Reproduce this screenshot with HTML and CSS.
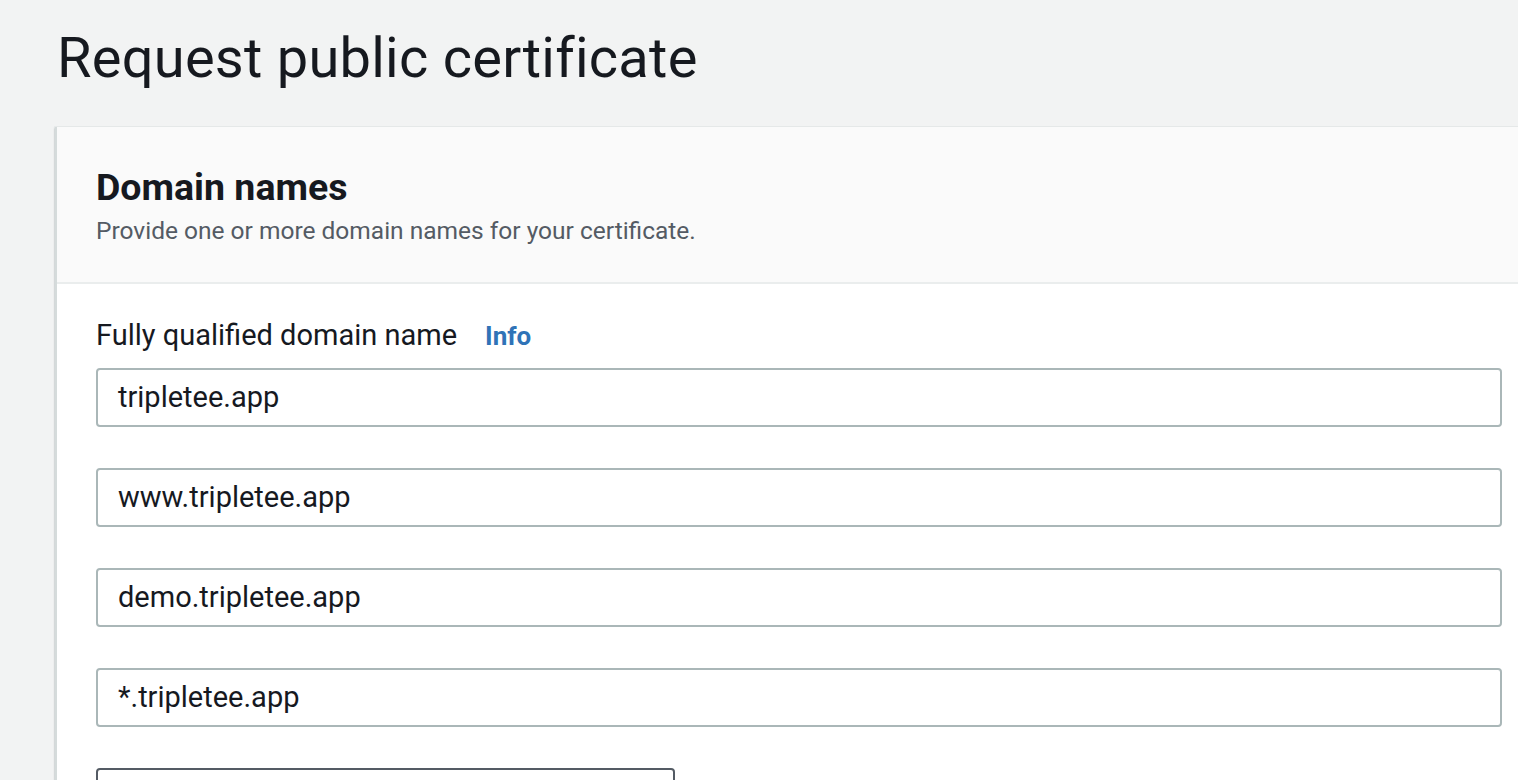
FILE: index.html
```html
<!DOCTYPE html>
<html>
<head>
<meta charset="utf-8">
<link rel="stylesheet" href="styles.css">
</head>
<body>
<main class="page">
  <h1 class="page-title">Request public certificate</h1>
  <section class="card">
    <header class="card-header">
      <h2 class="card-title">Domain names</h2>
      <p class="card-desc">Provide one or more domain names for your certificate.</p>
    </header>
    <div class="card-body">
      <div class="field-label">
        <span>Fully qualified domain name</span>
        <a class="info-link">Info</a>
      </div>
      <div class="inputs">
        <div class="text-input">tripletee.app</div>
        <div class="text-input">www.tripletee.app</div>
        <div class="text-input">demo.tripletee.app</div>
        <div class="text-input">*.tripletee.app</div>
        <div class="add-button"></div>
      </div>
    </div>
  </section>
</main>
</body>
</html>
```

FILE: styles.css
```css
html, body {
  margin: 0;
  padding: 0;
  background: #f2f3f3;
  overflow: hidden;
  height: 780px;
}
body {
  font-family: Roboto, "Liberation Sans", sans-serif;
  color: #16191f;
}
.page {
  padding-left: 55px;
}
.page-title {
  margin: 0;
  padding: 22px 0 0 2px;
  height: 127px;
  box-sizing: border-box;
  font-size: 56px;
  font-weight: 400;
  line-height: 72px;
  letter-spacing: 0.25px;
  color: #16191f;
}
.card {
  width: 1488px;
  background: #fff;
  border-left: 2px solid #d5dbdb;
  box-shadow: 0 1px 2px rgba(0,28,36,0.3), 0 0 0 1px #eaeded;
}
.card-header {
  background: #fafafa;
  border-bottom: 2px solid #eaeded;
  padding: 38px 40px 34px 39px;
  height: 157px;
  box-sizing: border-box;
}
.card-title {
  margin: 0;
  font-size: 37.5px;
  font-weight: 700;
  line-height: 44px;
}
.card-desc {
  margin: 2px 0 0;
  font-size: 24.5px;
  line-height: 40px;
  color: #545b64;
}
.card-body {
  padding: 29px 40px 0 39px;
}
.field-label {
  display: flex;
  align-items: baseline;
  gap: 28px;
  font-size: 29px;
  line-height: 44px;
}
.info-link {
  color: #2f73b7;
  font-weight: 700;
  font-size: 26px;
}
.inputs {
  margin-top: 10px;
  display: flex;
  flex-direction: column;
  gap: 41px;
}
.text-input {
  width: 1406px;
  height: 59px;
  box-sizing: border-box;
  border: 2px solid #aab7b8;
  border-radius: 4px;
  padding: 0 20px;
  font-size: 29px;
  line-height: 55px;
  color: #16191f;
}
.add-button {
  width: 579px;
  height: 59px;
  box-sizing: border-box;
  border: 2px solid #545b64;
  border-radius: 4px;
}
```
